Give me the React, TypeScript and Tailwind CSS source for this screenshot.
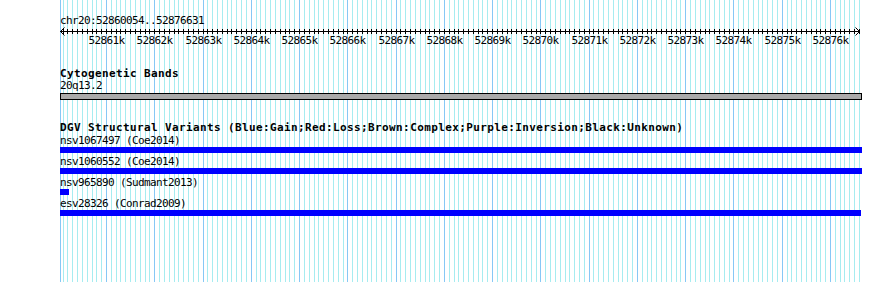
const START = 52860054;
const X0 = 60.34;
const SCALE = 0.048267;
const px = (bp: number) => X0 + (bp - START) * SCALE;

const LIGHT = "#a6ecf0";
const DARK = "#87c8f5";

const minor: number[] = [];
for (let bp = 52860100; bp <= 52876600; bp += 100) minor.push(bp);
const majors: number[] = [];
for (let kb = 52861; kb <= 52876; kb++) majors.push(kb);

const rows = [
  { label: "nsv1067497 (Coe2014)", w: 802 },
  { label: "nsv1060552 (Coe2014)", w: 802 },
  { label: "nsv965890 (Sudmant2013)", w: 9 },
  { label: "esv28326 (Conrad2009)", w: 801 },
];

function Grid() {
  return (
    <svg className="absolute inset-0 pointer-events-none" width={890} height={282}>
      <rect x={60} y={0} width={1} height={282} fill={DARK} />
      {minor.map((bp) => (
        <rect
          key={bp}
          x={Math.round(px(bp))}
          y={0}
          width={1}
          height={282}
          fill={bp % 1000 === 0 ? DARK : LIGHT}
        />
      ))}
    </svg>
  );
}

function Ruler() {
  return (
    <svg className="block" width={890} height={20}>
      <rect x={60} y={4} width={800} height={1} fill="#000" />
      <path d="M60.5 4.5 L64.5 0.5 M60.5 4.5 L64.5 8.5" stroke="#000" fill="none" />
      <path d="M859.5 4.5 L855.5 0.5 M859.5 4.5 L855.5 8.5" stroke="#000" fill="none" />
      {minor.map((bp) => (
        <rect key={bp} x={Math.round(px(bp))} y={2} width={1} height={5} fill="#000" />
      ))}
      {majors.map((kb) => (
        <text
          key={kb}
          x={Math.round(px(kb * 1000)) + 0.5}
          y={17}
          textAnchor="middle"
          fontFamily="DejaVu Sans Mono, monospace"
          fontSize={11}
          letterSpacing={-0.62}
          fill="#000"
        >
          {kb}k
        </text>
      ))}
    </svg>
  );
}

export default function App() {
  return (
    <div className="relative w-[890px] h-[282px] bg-white overflow-hidden text-black font-['DejaVu_Sans_Mono',monospace]">
      <Grid />
      <div className="relative">
        <div className="pt-[15px] pl-[60px] h-[27px] text-[11px] leading-[12px] tracking-[-0.62px]">
          chr20:52860054..52876631
        </div>
        <Ruler />

        <div className="mt-[21px] pl-[60px]">
          <div className="h-[12px] text-[11px] leading-[12px] font-bold tracking-[0.38px]">Cytogenetic Bands</div>
          <div className="h-[12px] text-[11px] leading-[12px] tracking-[-0.62px]">20q13.2</div>
          <div className="mt-[1px] w-[802px] h-[7px] border border-black bg-[#aaaaaa]" />
        </div>

        <div className="mt-[22px] pl-[60px]">
          <div className="h-[13px] text-[11px] leading-[12px] font-bold tracking-[0.38px] whitespace-nowrap">
            DGV Structural Variants (Blue:Gain;Red:Loss;Brown:Complex;Purple:Inversion;Black:Unknown)
          </div>
          {rows.map((r, i) => (
            <div key={r.label} className={i === 0 ? "" : "pt-[3px]"}>
              <div className="h-[12px] text-[11px] leading-[12px] tracking-[-0.62px] whitespace-nowrap">{r.label}</div>
              <div className="h-[6px] bg-[#0000ff]" style={{ width: r.w }} />
            </div>
          ))}
        </div>
      </div>
    </div>
  );
}
